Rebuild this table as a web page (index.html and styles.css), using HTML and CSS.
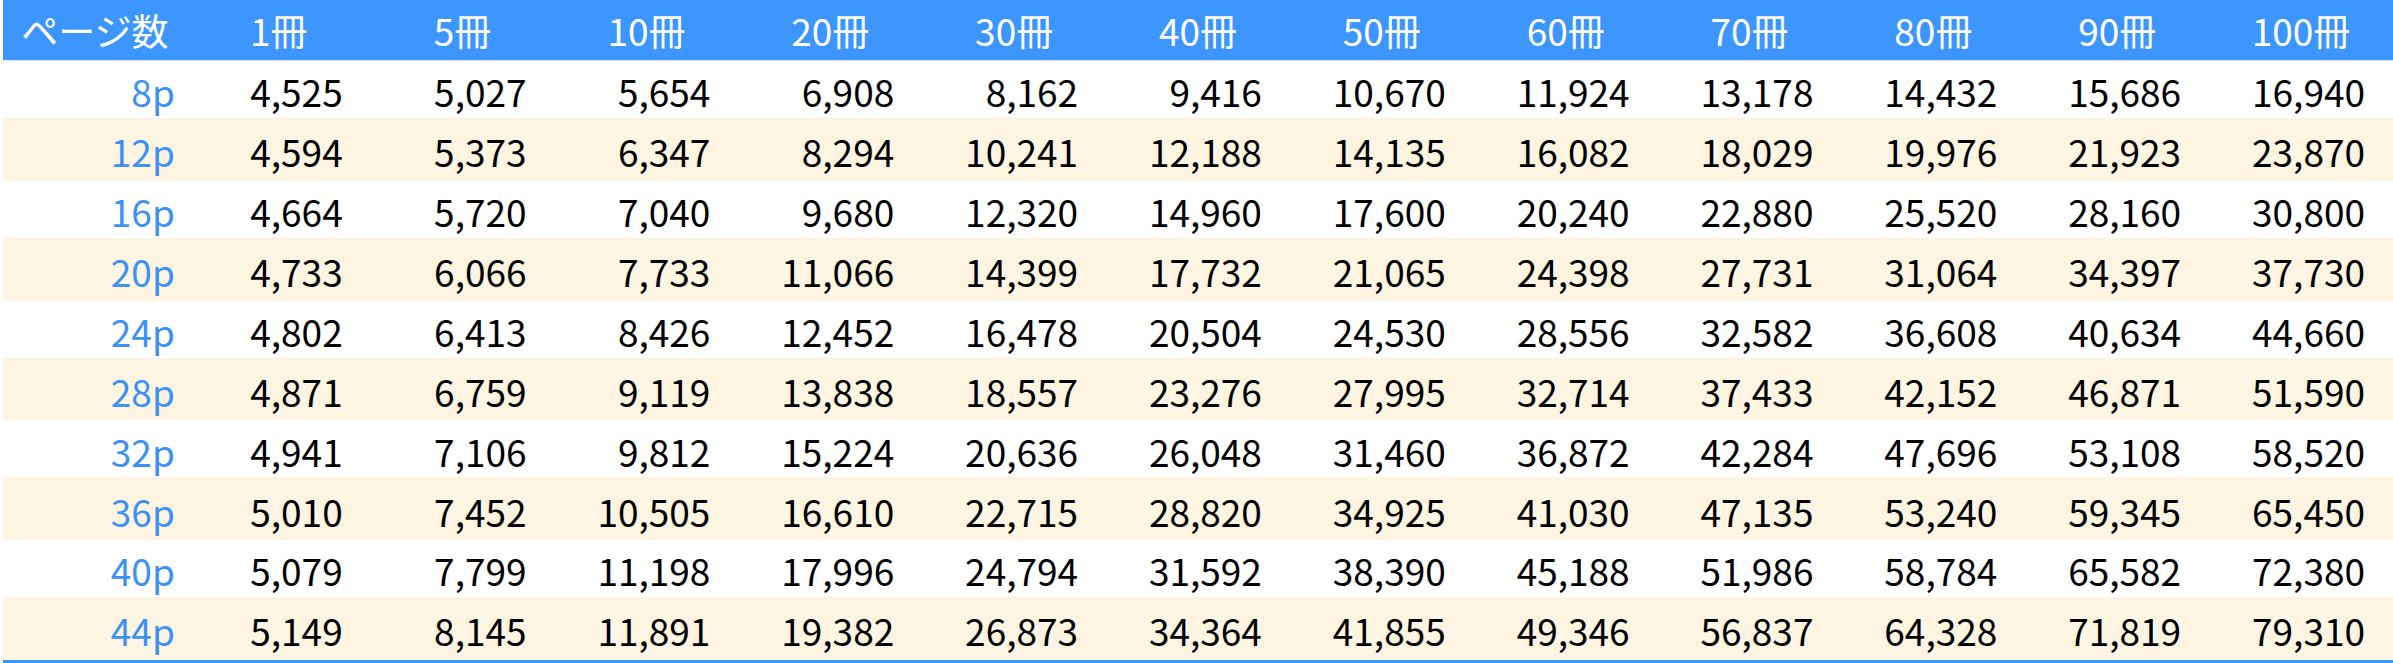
FILE: index.html
```html
<!DOCTYPE html>
<html lang="ja">
<head>
<meta charset="utf-8">
<title>価格表</title>
<link rel="stylesheet" href="styles.css">
</head>
<body>
<div class="wrap">
<table class="price-table">
<thead>
<tr>
<th class="corner">ページ数</th><th>1冊</th><th>5冊</th><th>10冊</th><th>20冊</th><th>30冊</th><th>40冊</th><th>50冊</th><th>60冊</th><th>70冊</th><th>80冊</th><th>90冊</th><th>100冊</th>
</tr>
</thead>
<tbody>
<tr class="odd"><th>8p</th><td>4,525</td><td>5,027</td><td>5,654</td><td>6,908</td><td>8,162</td><td>9,416</td><td>10,670</td><td>11,924</td><td>13,178</td><td>14,432</td><td>15,686</td><td>16,940</td></tr>
<tr class="even"><th>12p</th><td>4,594</td><td>5,373</td><td>6,347</td><td>8,294</td><td>10,241</td><td>12,188</td><td>14,135</td><td>16,082</td><td>18,029</td><td>19,976</td><td>21,923</td><td>23,870</td></tr>
<tr class="odd"><th>16p</th><td>4,664</td><td>5,720</td><td>7,040</td><td>9,680</td><td>12,320</td><td>14,960</td><td>17,600</td><td>20,240</td><td>22,880</td><td>25,520</td><td>28,160</td><td>30,800</td></tr>
<tr class="even"><th>20p</th><td>4,733</td><td>6,066</td><td>7,733</td><td>11,066</td><td>14,399</td><td>17,732</td><td>21,065</td><td>24,398</td><td>27,731</td><td>31,064</td><td>34,397</td><td>37,730</td></tr>
<tr class="odd"><th>24p</th><td>4,802</td><td>6,413</td><td>8,426</td><td>12,452</td><td>16,478</td><td>20,504</td><td>24,530</td><td>28,556</td><td>32,582</td><td>36,608</td><td>40,634</td><td>44,660</td></tr>
<tr class="even"><th>28p</th><td>4,871</td><td>6,759</td><td>9,119</td><td>13,838</td><td>18,557</td><td>23,276</td><td>27,995</td><td>32,714</td><td>37,433</td><td>42,152</td><td>46,871</td><td>51,590</td></tr>
<tr class="odd"><th>32p</th><td>4,941</td><td>7,106</td><td>9,812</td><td>15,224</td><td>20,636</td><td>26,048</td><td>31,460</td><td>36,872</td><td>42,284</td><td>47,696</td><td>53,108</td><td>58,520</td></tr>
<tr class="even"><th>36p</th><td>5,010</td><td>7,452</td><td>10,505</td><td>16,610</td><td>22,715</td><td>28,820</td><td>34,925</td><td>41,030</td><td>47,135</td><td>53,240</td><td>59,345</td><td>65,450</td></tr>
<tr class="odd"><th>40p</th><td>5,079</td><td>7,799</td><td>11,198</td><td>17,996</td><td>24,794</td><td>31,592</td><td>38,390</td><td>45,188</td><td>51,986</td><td>58,784</td><td>65,582</td><td>72,380</td></tr>
<tr class="even"><th>44p</th><td>5,149</td><td>8,145</td><td>11,891</td><td>19,382</td><td>26,873</td><td>34,364</td><td>41,855</td><td>49,346</td><td>56,837</td><td>64,328</td><td>71,819</td><td>79,310</td></tr>
</tbody>
</table>
</div>
</body>
</html>
```

FILE: styles.css
```css
html, body {
  margin: 0;
  padding: 0;
  background: #ffffff;
}

.wrap {
  padding-left: 3px;
}

.price-table {
  width: 2390px;
  table-layout: fixed;
  border-collapse: collapse;
  border-spacing: 0;
  font-family: "Noto Sans CJK JP", "Liberation Sans", sans-serif;
  font-size: 37px;
  line-height: 1.2;
  color: #000000;
  border-bottom: 3px solid #3c96fd;
}

.price-table thead th {
  height: 60px;
  padding: 0;
  background: #3c96fd;
  color: #ffffff;
  font-weight: normal;
  text-align: center;
  vertical-align: middle;
  border-bottom: 1px solid #cfe3fb;
}

.price-table tbody th,
.price-table tbody td {
  padding: 4px 28px 0 0;
  vertical-align: middle;
  text-align: right;
  font-weight: normal;
}

.price-table tbody th {
  color: #3b91f5;
  padding-right: 12px;
}

.price-table tr.odd th,
.price-table tr.odd td {
  height: 53px;
  background: #ffffff;
}

.price-table tr.even th,
.price-table tr.even td {
  height: 58.8px;
  background: #fdf4e1;
}
```
